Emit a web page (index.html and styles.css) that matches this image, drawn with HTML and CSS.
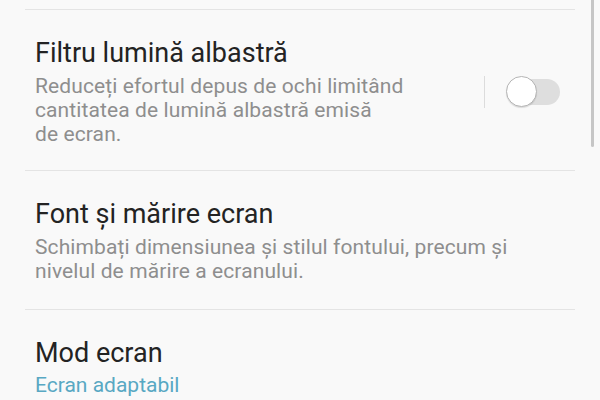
FILE: index.html
```html
<!DOCTYPE html>
<html lang="ro">
<head>
<meta charset="utf-8">
<link rel="stylesheet" href="styles.css">
</head>
<body>
<div class="screen">
  <div class="list">
    <div class="item item-top"></div>
    <div class="item item-switch">
      <div class="text">
        <div class="title">Filtru lumină albastră</div>
        <div class="desc">Reduceți efortul depus de ochi limitând<br>cantitatea de lumină albastră emisă<br>de ecran.</div>
      </div>
      <div class="switch-area">
        <span class="sep"></span>
        <span class="toggle"><span class="knob"></span></span>
      </div>
    </div>
    <div class="item">
      <div class="text">
        <div class="title">Font și mărire ecran</div>
        <div class="desc">Schimbați dimensiunea și stilul fontului, precum și<br>nivelul de mărire a ecranului.</div>
      </div>
    </div>
    <div class="item item-last">
      <div class="text">
        <div class="title">Mod ecran</div>
        <div class="value">Ecran adaptabil</div>
      </div>
    </div>
  </div>
  <div class="scrollbar"></div>
</div>
</body>
</html>
```
FILE: styles.css
```css
html, body {
  margin: 0;
  padding: 0;
}
body {
  width: 600px;
  height: 400px;
  overflow: hidden;
  background: #f9f9f9;
  font-family: Roboto, "Noto Sans", "Liberation Sans", sans-serif;
}
.screen {
  position: relative;
  width: 600px;
  height: 400px;
  overflow: hidden;
}
.list {
  display: flex;
  flex-direction: column;
}
.item {
  margin: 0 25px;
  padding: 27px 15px 26px 10px;
  border-bottom: 1px solid #e4e4e4;
  display: flex;
  align-items: center;
}
.item-top {
  padding: 0;
  height: 9px;
}
.item-switch {
  padding-bottom: 24px;
}
.item-last {
  border-bottom: none;
}
.text {
  flex: 1;
  min-width: 0;
}
.title {
  font-size: 27px;
  line-height: 32px;
  color: #232323;
  white-space: nowrap;
}
.desc {
  margin-top: 5px;
  font-size: 21px;
  line-height: 24px;
  letter-spacing: 0.1px;
  color: #8e8e8e;
  white-space: nowrap;
}
.value {
  margin-top: 4px;
  font-size: 21px;
  line-height: 24px;
  color: #58a8c3;
}
.switch-area {
  display: flex;
  align-items: center;
}
.sep {
  width: 1px;
  height: 32px;
  background: #dcdcdc;
  margin-right: 22px;
}
.toggle {
  position: relative;
  width: 53px;
  height: 26px;
  border-radius: 13px;
  background: #dedede;
}
.knob {
  position: absolute;
  left: -1px;
  top: -3px;
  width: 29px;
  height: 29px;
  border-radius: 50%;
  background: #ffffff;
  border: 1.5px solid #b5b5b5;
  box-shadow: 0 1px 1px rgba(0,0,0,0.12);
}
.scrollbar {
  position: absolute;
  left: 591px;
  top: 0;
  width: 3px;
  height: 147px;
  background: #c6c6c6;
  border-radius: 0 0 2px 2px;
}
```
